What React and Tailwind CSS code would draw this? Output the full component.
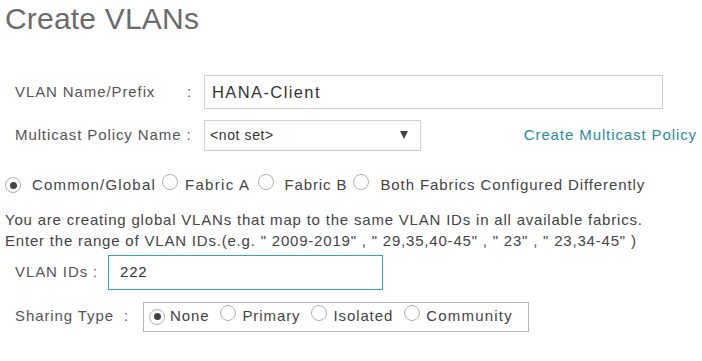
import React from "react";

function Radio({ checked }) {
  return (
    <span className="inline-flex h-[16px] w-[16px] shrink-0 items-center justify-center rounded-full border border-[#b0b0b0] bg-white">
      {checked && <span className="h-[7px] w-[7px] rounded-full bg-[#444]" />}
    </span>
  );
}

export default function App() {
  const font = { fontFamily: '"Liberation Sans", Arial, sans-serif' };
  return (
    <div className="h-[361px] w-[702px] overflow-hidden bg-white text-[#555] tracking-[0.9px]" style={font}>
      <div className="pl-[5px] pt-[2px] text-[30px] leading-[34px] tracking-[0.2px] text-[#6b6b6b]">Create VLANs</div>

      <div className="mt-[39px] flex items-center pl-[15px]">
        <div className="flex w-[189px] text-[15px]">
          <span className="w-[172px]">VLAN Name/Prefix</span>
          <span>:</span>
        </div>
        <div className="flex h-[34px] w-[459px] items-center border border-[#cfcfcf] pl-[7px] text-[16.5px] tracking-[1.4px] text-[#333]">
          HANA-Client
        </div>
      </div>

      <div className="mt-[11px] flex items-center pl-[15px]">
        <div className="w-[189px] text-[15px]">Multicast Policy Name :</div>
        <div className="relative flex h-[31px] w-[217px] items-center border border-[#cfcfcf] pl-[5px] text-[14px] tracking-[0.6px] text-[#333]">
          &lt;not set&gt;
          <span className="absolute right-[12px] top-[10px] h-0 w-0 border-x-[4.5px] border-t-[8px] border-x-transparent border-t-[#444]" />
        </div>
        <a className="ml-auto mr-[5px] text-[15px] text-[#2a8ba2]">Create Multicast Policy</a>
      </div>

      <div className="mt-[23px] flex items-center pl-[5px] text-[15px] text-[#444]">
        <Radio checked />
        <span className="ml-[11px] tracking-[1.2px]">Common/Global</span>
        <span className="ml-[6px]"><Radio /></span>
        <span className="ml-[7px] tracking-[1.3px]">Fabric A</span>
        <span className="ml-[8px]"><Radio /></span>
        <span className="ml-[10px]">Fabric B</span>
        <span className="ml-[6px]"><Radio /></span>
        <span className="ml-[11px]">Both Fabrics Configured Differently</span>
      </div>

      <div className="mt-[12px] pl-[5px] text-[15px] leading-[21px] tracking-[0.8px] text-[#444]">
        <div>You are creating global VLANs that map to the same VLAN IDs in all available fabrics.</div>
        <div>Enter the range of VLAN IDs.(e.g. " 2009-2019" , " 29,35,40-45" , " 23" , " 23,34-45" )</div>
      </div>

      <div className="mt-[4px] flex items-center pl-[15px]">
        <div className="w-[93px] text-[15px]">VLAN IDs :</div>
        <div className="flex h-[35px] w-[275px] items-center border-[1.5px] border-[#3aa2bb] pl-[11px] text-[15px] tracking-[0.8px] text-[#333]">
          222
        </div>
      </div>

      <div className="mt-[12px] flex items-center pl-[15px]">
        <div className="w-[128px] text-[15px]">Sharing Type&nbsp; :</div>
        <div className="flex h-[30px] w-[386px] items-center border border-[#b5b5b5] pl-[5px] text-[15px] text-[#444]">
          <Radio checked />
          <span className="ml-[5px]">None</span>
          <span className="ml-[11px]"><Radio /></span>
          <span className="ml-[6px]">Primary</span>
          <span className="ml-[11px]"><Radio /></span>
          <span className="ml-[6px]">Isolated</span>
          <span className="ml-[11px]"><Radio /></span>
          <span className="ml-[6px] tracking-[1.2px]">Community</span>
        </div>
      </div>
    </div>
  );
}
